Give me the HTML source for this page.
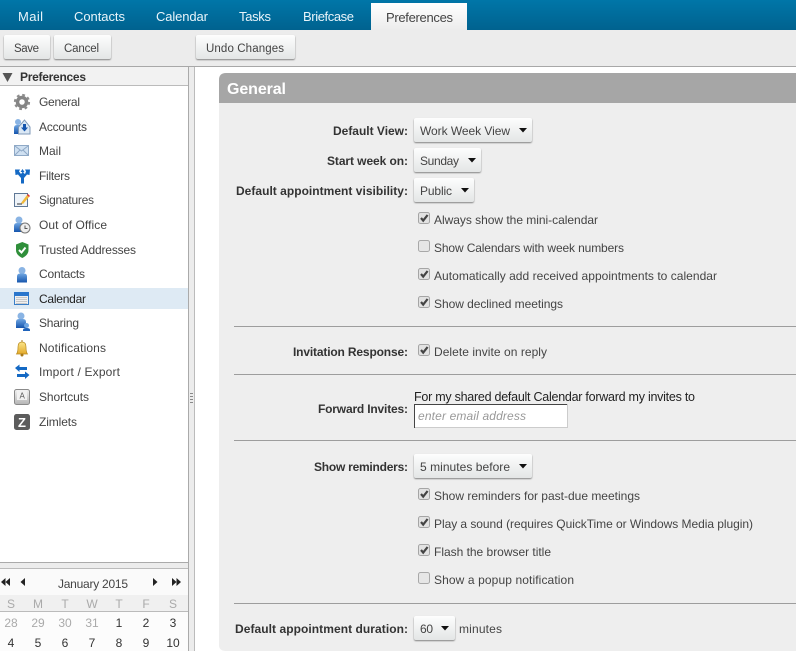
<!DOCTYPE html>
<html><head><meta charset="utf-8"><title>Preferences</title>
<style>
html,body{margin:0;padding:0;width:796px;height:651px;overflow:hidden;background:#fff}
svg{display:block}
text{font-family:"Liberation Sans",Arial,sans-serif;font-size:12.5px;fill:#333}
.t{font-size:13px;fill:#e8f4fa}
.b{font-weight:bold;fill:#333;font-size:12px}
.m{font-size:12px;fill:#444}
.k{font-size:11.5px;fill:#444}
.c{text-anchor:middle;font-size:12px;fill:#333}
.g{text-anchor:middle;font-size:12px;fill:#aaa}
</style></head><body>
<svg width="796" height="651" viewBox="0 0 796 651" xmlns="http://www.w3.org/2000/svg">
<defs>
<linearGradient id="top" x1="0" y1="0" x2="0" y2="1"><stop offset="0" stop-color="#0076a8"/><stop offset="1" stop-color="#00628f"/></linearGradient>
<linearGradient id="tab" x1="0" y1="0" x2="0" y2="1"><stop offset="0" stop-color="#fff"/><stop offset="1" stop-color="#ececec"/></linearGradient>
<linearGradient id="btn" x1="0" y1="0" x2="0" y2="1"><stop offset="0" stop-color="#fdfdfd"/><stop offset="1" stop-color="#e3e5e5"/></linearGradient>
<filter id="sh" x="-10%" y="-10%" width="120%" height="130%"><feDropShadow dx="0" dy="1" stdDeviation="0.7" flood-color="#555" flood-opacity=".7"/></filter>
<linearGradient id="bl" x1="0" y1="0" x2="0" y2="1"><stop offset="0" stop-color="#6fa6e2"/><stop offset="1" stop-color="#1555ad"/></linearGradient>
<linearGradient id="yl" x1="0" y1="0" x2="0" y2="1"><stop offset="0" stop-color="#fbe68a"/><stop offset="1" stop-color="#e3a92a"/></linearGradient>
<linearGradient id="key" x1="0" y1="0" x2="0" y2="1"><stop offset="0" stop-color="#f2f2f2"/><stop offset="1" stop-color="#b5b5b5"/></linearGradient>
<g id="person"><circle cx="0" cy="0" r="3.500" fill="#8ab4e4"/><path d="M-5 12V6Q-5 3-2 3H2Q5 3 5 6V12Z" fill="url(#bl)"/></g>
<g id="chk"><rect x=".5" y=".5" width="11" height="11" rx="2" fill="#e2e2e2" stroke="#a5a5a5"/><path d="M3 6L5.200 8.600L9.600 3" fill="none" stroke="#444" stroke-width="2.200"/></g>
<g id="unchk"><rect x=".5" y=".5" width="11" height="11" rx="2" fill="#e6e6e6" stroke="#a8a8a8"/></g>
</defs>

<!-- top bar -->
<rect width="796" height="30" fill="url(#top)"/>
<path d="M371 30V3H467V30Z" fill="url(#tab)"/>
<text class="t" x="18" y="21" textLength="25">Mail</text>
<text class="t" x="74" y="21" textLength="51">Contacts</text>
<text class="t" x="156" y="21" textLength="52">Calendar</text>
<text class="t" x="239" y="21" textLength="32">Tasks</text>
<text class="t" x="303" y="21" textLength="51">Briefcase</text>
<text x="386" y="22" textLength="67" style="font-size:13px;fill:#444">Preferences</text>

<!-- toolbar -->
<rect y="30" width="796" height="36" fill="#ececec"/>
<rect x="4" y="35" width="46" height="24" rx="2" fill="url(#btn)" filter="url(#sh)"/>
<rect x="54" y="35" width="57" height="24" rx="2" fill="url(#btn)" filter="url(#sh)"/>
<rect x="196" y="35" width="99" height="24" rx="2" fill="url(#btn)" filter="url(#sh)"/>
<text class="k" x="14" y="52" textLength="25">Save</text>
<text class="k" x="64" y="52" textLength="35">Cancel</text>
<text class="k" x="206" y="52" textLength="78">Undo Changes</text>
<rect y="66" width="796" height="1" fill="#a8a8a8"/>

<!-- left panel -->
<rect y="67" width="188" height="19" fill="#f2f2f2"/>
<rect y="85" width="188" height="1" fill="#bbb"/>
<path d="M2.500 73H12.500L7.500 82Z" fill="#555"/>
<text class="b" x="20" y="81" textLength="66">Preferences</text>
<rect y="288" width="188" height="21" fill="#deeaf4"/>
<rect x="188" y="67" width="1" height="584" fill="#aaa"/>
<rect x="189" y="67" width="5" height="584" fill="#ececec"/>
<rect x="194" y="67" width="1" height="584" fill="#bbb"/>
<rect x="190" y="393" width="3" height="1" fill="#888"/><rect x="190" y="396" width="3" height="1" fill="#888"/><rect x="190" y="399" width="3" height="1" fill="#888"/><rect x="190" y="402" width="3" height="1" fill="#888"/>

<!-- nav icons -->
<circle cx="22" cy="102" r="4.500" fill="none" stroke="#858585" stroke-width="3.500"/><circle cx="22" cy="102" r="7" fill="none" stroke="#8c8c8c" stroke-width="2.200" stroke-dasharray="2.750 2.750"/>
<circle cx="18" cy="122" r="3" fill="#8ab4e4"/><path d="M14 134V128Q14 125 17 125H20V134Z" fill="url(#bl)"/>
<path d="M18.500 134V127L24.500 120L30 127V134Z" fill="#dbe8f5" stroke="#7f99b8"/><path d="M23 124H26V127.500H28L24.500 131.500L21 127.500H23Z" fill="#1555ad"/>
<rect x="14.500" y="145.500" width="14" height="10" fill="#cfe0f1" stroke="#8fa9c6"/><path d="M15 146L21.500 151L28 146M15 155L20 150M28 155L23 150" fill="none" stroke="#8fa9c6"/>
<path d="M15 169.500H20L19 171.500L21 174L22.500 172L20.500 172L22.500 169L24.500 172L23 172.500L25 174L26 171.500L25 169.500H30L29.500 175L27 174.500L24 178V183.500H21V178L18 174.500L15.500 175Z" fill="#1469c4"/>
<rect x="14.500" y="193.500" width="13" height="13" fill="#eef3f8" stroke="#5f7896"/><path d="M17 204H22" stroke="#333"/><path d="M21 203L27 195L29 197L23 204Z" fill="#f0b93c"/><path d="M27 195L28 194L30 196L29 197Z" fill="#e03030"/>
<use href="#person" x="19" y="220"/><circle cx="25" cy="228" r="5" fill="#eee" stroke="#777"/><path d="M25 225.500V228.500H27.500" stroke="#555" fill="none"/>
<path d="M22.300 242L28.500 244.500V250Q28.500 255 22.300 258Q16 255 16 250V244.500Z" fill="#2f8f3a"/><path d="M19 250L21.500 252.500L25.500 247.500" stroke="#fff" stroke-width="2" fill="none"/>
<use href="#person" x="22" y="270.500"/>
<rect x="14.500" y="292.500" width="14" height="12" fill="#f0f0f0" stroke="#3a7fc8"/><rect x="14" y="292" width="15" height="4" fill="#2a76cc"/>
<g fill="#c8c8c8"><rect x="16" y="297" width="11" height="1"/><rect x="16" y="299" width="11" height="1"/><rect x="16" y="301" width="11" height="1"/><rect x="16" y="303" width="11" height="1"/></g>
<use href="#person" x="21" y="316"/><circle cx="26.500" cy="325.500" r="2.500" fill="#6fa6e2"/><path d="M23 331V330Q23 328 26.500 328Q30 328 30 330V331Z" fill="#1f63bb"/>
<path d="M16.500 354Q18 352 18 347Q18 342 22 342Q26 342 26 347Q26 352 27.500 354Z" fill="url(#yl)" stroke="#b88a1f" stroke-width=".7"/><circle cx="22" cy="355" r="1.500" fill="#a8791a"/><rect x="21.500" y="340" width="1" height="2" fill="#a8791a"/>
<path d="M15 368L19.500 364.500V367H27V370H19.500V372Z" fill="#1469c4"/><path d="M29.500 375L25 371.500V374H17V377H25V379Z" fill="#1469c4"/>
<rect x="14.500" y="389.500" width="15" height="15" rx="2" fill="url(#key)" stroke="#8a8a8a"/><rect x="17" y="390" width="10" height="10" fill="#f2f2f2"/><text x="19.500" y="398.500" style="font-size:8px;fill:#555">A</text>
<rect x="14" y="414" width="16" height="16" rx="2.500" fill="#5c5c5c"/><text x="18" y="427" style="font-size:13px;font-weight:bold;fill:#fff">Z</text>

<!-- nav text -->
<text class="m" x="39" y="106" textLength="41">General</text>
<text class="m" x="39" y="131" textLength="48">Accounts</text>
<text class="m" x="39" y="155" textLength="22">Mail</text>
<text class="m" x="39" y="180" textLength="31">Filters</text>
<text class="m" x="39" y="204" textLength="55">Signatures</text>
<text class="m" x="39" y="229" textLength="68">Out of Office</text>
<text class="m" x="39" y="254" textLength="97">Trusted Addresses</text>
<text class="m" x="39" y="278" textLength="46">Contacts</text>
<text class="m" x="39" y="303" textLength="47" style="fill:#222">Calendar</text>
<text class="m" x="39" y="327" textLength="40">Sharing</text>
<text class="m" x="39" y="352" textLength="67">Notifications</text>
<text class="m" x="39" y="376" textLength="81">Import / Export</text>
<text class="m" x="39" y="401" textLength="50">Shortcuts</text>
<text class="m" x="39" y="426" textLength="38">Zimlets</text>

<!-- divider + mini-cal -->
<rect y="562" width="188" height="1" fill="#aaa"/>
<rect y="563" width="188" height="5" fill="#ececec"/>
<rect y="568" width="188" height="1" fill="#bbb"/>
<rect y="569" width="188" height="26" fill="#fafafa"/>
<rect y="595" width="188" height="16" fill="#f0f0f0"/>
<rect y="611" width="188" height="1" fill="#bbb"/>
<rect y="612" width="188" height="39" fill="#fcfcfc"/>
<path d="M5.500 578V586L1 582ZM10 578V586L5.500 582ZM25 578V586L20.500 582ZM153 578V586L157.500 582ZM172 578V586L176.500 582ZM176.500 578V586L181 582Z" fill="#222"/>
<text x="58" y="588" textLength="70" style="font-size:12px;fill:#444">January 2015</text>
<text class="g" x="11" y="608">S</text><text class="g" x="38" y="608">M</text><text class="g" x="65" y="608">T</text><text class="g" x="92" y="608">W</text><text class="g" x="119" y="608">T</text><text class="g" x="146" y="608">F</text><text class="g" x="173" y="608">S</text>
<text class="g" x="11" y="627">28</text><text class="g" x="38" y="627">29</text><text class="g" x="65" y="627">30</text><text class="g" x="92" y="627">31</text><text class="c" x="119" y="627">1</text><text class="c" x="146" y="627">2</text><text class="c" x="173" y="627">3</text>
<text class="c" x="11" y="647">4</text><text class="c" x="38" y="647">5</text><text class="c" x="65" y="647">6</text><text class="c" x="92" y="647">7</text><text class="c" x="119" y="647">8</text><text class="c" x="146" y="647">9</text><text class="c" x="173" y="647">10</text>

<!-- general section -->
<path d="M226 651Q219 651 219 645V80Q219 73 226 73H796V651Z" fill="#eeeeee"/>
<path d="M219 103V80Q219 73 226 73H796V103Z" fill="#a6a6a6"/>
<text x="227" y="94" textLength="59" style="font-size:16px;font-weight:bold;fill:#fff">General</text>

<!-- dividers -->
<rect x="234" y="326" width="562" height="1" fill="#9d9d9d"/>
<rect x="234" y="374" width="562" height="1" fill="#9d9d9d"/>
<rect x="234" y="440" width="562" height="1" fill="#9d9d9d"/>
<rect x="234" y="603" width="562" height="1" fill="#9d9d9d"/>

<!-- labels -->
<text class="b" x="333" y="135" textLength="75">Default View:</text>
<text class="b" x="327" y="165" textLength="81">Start week on:</text>
<text class="b" x="236" y="195" textLength="172">Default appointment visibility:</text>
<text class="b" x="293" y="356" textLength="115">Invitation Response:</text>
<text class="b" x="318" y="413" textLength="90">Forward Invites:</text>
<text class="b" x="314" y="471" textLength="94">Show reminders:</text>
<text class="b" x="235" y="633" textLength="173">Default appointment duration:</text>

<!-- selects -->
<rect x="414" y="118" width="118" height="24" rx="2" fill="url(#btn)" filter="url(#sh)"/>
<rect x="414" y="148" width="67" height="24" rx="2" fill="url(#btn)" filter="url(#sh)"/>
<rect x="414" y="178" width="60" height="24" rx="2" fill="url(#btn)" filter="url(#sh)"/>
<rect x="414" y="454" width="118" height="24" rx="2" fill="url(#btn)" filter="url(#sh)"/>
<rect x="414" y="616" width="41" height="24" rx="2" fill="url(#btn)" filter="url(#sh)"/>
<text class="m" x="420" y="135" textLength="90">Work Week View</text>
<text class="m" x="420" y="165" textLength="39">Sunday</text>
<text class="m" x="420" y="195" textLength="32">Public</text>
<text class="m" x="420" y="471" textLength="90">5 minutes before</text>
<text class="m" x="420" y="633" textLength="13">60</text>
<path d="M519 128H527L523 132.500ZM468 158H476L472 162.500ZM461 188H469L465 192.500ZM519 464H527L523 468.500ZM441 626H449L445 630.500Z" fill="#111"/>
<text class="m" x="459" y="633" textLength="43">minutes</text>

<!-- checkboxes -->
<use href="#chk" x="418" y="212"/>
<use href="#unchk" x="418" y="240"/>
<use href="#chk" x="418" y="268"/>
<use href="#chk" x="418" y="296"/>
<use href="#chk" x="418" y="344"/>
<use href="#chk" x="418" y="488"/>
<use href="#chk" x="418" y="516"/>
<use href="#chk" x="418" y="544"/>
<use href="#unchk" x="418" y="572"/>
<text class="m" x="434" y="224" textLength="164">Always show the mini-calendar</text>
<text class="m" x="434" y="252" textLength="190">Show Calendars with week numbers</text>
<text class="m" x="434" y="280" textLength="283">Automatically add received appointments to calendar</text>
<text class="m" x="434" y="308" textLength="129">Show declined meetings</text>
<text class="m" x="434" y="356" textLength="113">Delete invite on reply</text>
<text class="m" x="434" y="500" textLength="206">Show reminders for past-due meetings</text>
<text class="m" x="434" y="528" textLength="319">Play a sound (requires QuickTime or Windows Media plugin)</text>
<text class="m" x="434" y="556" textLength="117">Flash the browser title</text>
<text class="m" x="434" y="584" textLength="140">Show a popup notification</text>

<!-- forward invites -->
<text x="414" y="401" textLength="281" style="font-size:12.500px;fill:#222">For my shared default Calendar forward my invites to</text>
<rect x="414.500" y="404.500" width="153" height="23" fill="#fff" stroke="#ccc"/>
<path d="M414.500 428V404.500H567" fill="none" stroke="#444"/>
<text x="418" y="420" textLength="108" style="font-size:12px;font-style:italic;fill:#999">enter email address</text>
</svg>
</body></html>
